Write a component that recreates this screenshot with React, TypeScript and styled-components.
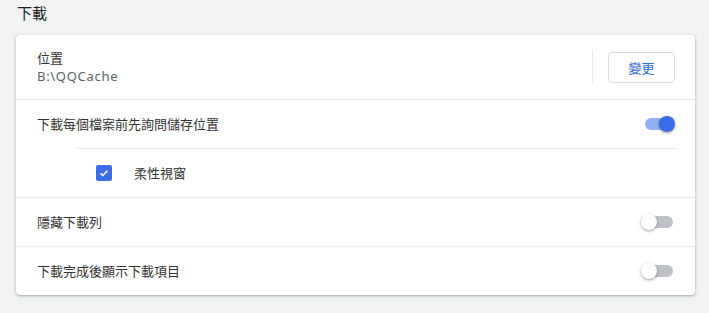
import React, { useState } from 'react'
import styled, { createGlobalStyle } from 'styled-components'

const GlobalStyle = createGlobalStyle`
  body {
    margin: 0;
    background: #f1f3f4;
    font-family: 'Noto Sans', 'Noto Sans CJK TC', sans-serif;
    color: #333;
  }
`

const Page = styled.div`
  padding: 0 14px 18px 16px;
`

const Title = styled.h2`
  margin: 0;
  padding: 2px 0 0 1px;
  height: 33px;
  font-size: 15px;
  font-weight: 400;
  line-height: 22px;
  color: #202124;
`

const Card = styled.section`
  background: #fff;
  border-radius: 4px;
  box-shadow: 0 1px 2px rgba(60, 64, 67, 0.3), 0 1px 3px 1px rgba(60, 64, 67, 0.12);
`

const Row = styled.div<{ $tall?: boolean; $plain?: boolean }>`
  display: flex;
  align-items: center;
  min-height: ${({ $tall }) => ($tall ? '64px' : '48px')};
  padding: 0 20px 0 21px;
  border-bottom: ${({ $plain }) => ($plain ? 'none' : '1px solid #e8eaed')};
`

const SubBlock = styled.div`
  border-bottom: 1px solid #e8eaed;
`

const SubRow = styled.div`
  display: flex;
  align-items: center;
  height: 48px;
  margin: 0 18px 0 60px;
  padding-left: 20px;
  border-top: 1px solid #e8eaed;
`

const Label = styled.div`
  flex: 1;
  font-size: 13px;
  line-height: 18px;
  color: #333;
`

const Sub = styled.div`
  color: #5f6368;
  font-size: 13px;
  line-height: 18px;
  letter-spacing: 0.7px;
`

const Divider = styled.div`
  width: 1px;
  height: 34px;
  background: #e8eaed;
  margin-right: 15px;
`

const Button = styled.button`
  width: 67px;
  height: 31px;
  border: 1px solid #dadce0;
  border-radius: 4px;
  background: #fff;
  color: #3367d6;
  font-family: 'Noto Sans CJK TC', sans-serif;
  font-size: 13px;
  cursor: pointer;
`

const Track = styled.button<{ $on: boolean }>`
  position: relative;
  width: 28px;
  height: 12px;
  margin-right: 2px;
  padding: 0;
  border: none;
  border-radius: 6px;
  background: ${({ $on }) => ($on ? '#8fb0f2' : '#bdc1c6')};
  cursor: pointer;

  &::after {
    content: '';
    position: absolute;
    top: -2px;
    left: ${({ $on }) => ($on ? '14px' : '-4px')};
    width: 16px;
    height: 16px;
    border-radius: 50%;
    background: ${({ $on }) => ($on ? '#3b6ee6' : '#fff')};
    box-shadow: 0 1px 3px rgba(0, 0, 0, 0.4);
  }
`

const Box = styled.span`
  display: inline-flex;
  align-items: center;
  justify-content: center;
  width: 16px;
  height: 16px;
  border-radius: 2px;
  background: #3b6ee6;
  margin-right: 22px;
`

const Toggle: React.FC<{ initial: boolean }> = ({ initial }) => {
  const [on, setOn] = useState(initial)
  return <Track $on={on} onClick={() => setOn(!on)} aria-pressed={on} />
}

export default function App() {
  return (
    <>
      <GlobalStyle />
      <Page>
        <Title>下載</Title>
        <Card>
          <Row $tall>
            <Label>
              位置
              <Sub>B:\QQCache</Sub>
            </Label>
            <Divider />
            <Button>變更</Button>
          </Row>
          <Row $plain>
            <Label>下載每個檔案前先詢問儲存位置</Label>
            <Toggle initial={true} />
          </Row>
          <SubBlock>
            <SubRow>
              <Box>
                <svg width="12" height="12" viewBox="0 0 24 24">
                  <path d="M5 12.5l4.5 4.5L19 7.5" fill="none" stroke="#fff" strokeWidth="3" />
                </svg>
              </Box>
              <Label>柔性視窗</Label>
            </SubRow>
          </SubBlock>
          <Row>
            <Label>隱藏下載列</Label>
            <Toggle initial={false} />
          </Row>
          <Row $plain>
            <Label>下載完成後顯示下載項目</Label>
            <Toggle initial={false} />
          </Row>
        </Card>
      </Page>
    </>
  )
}
